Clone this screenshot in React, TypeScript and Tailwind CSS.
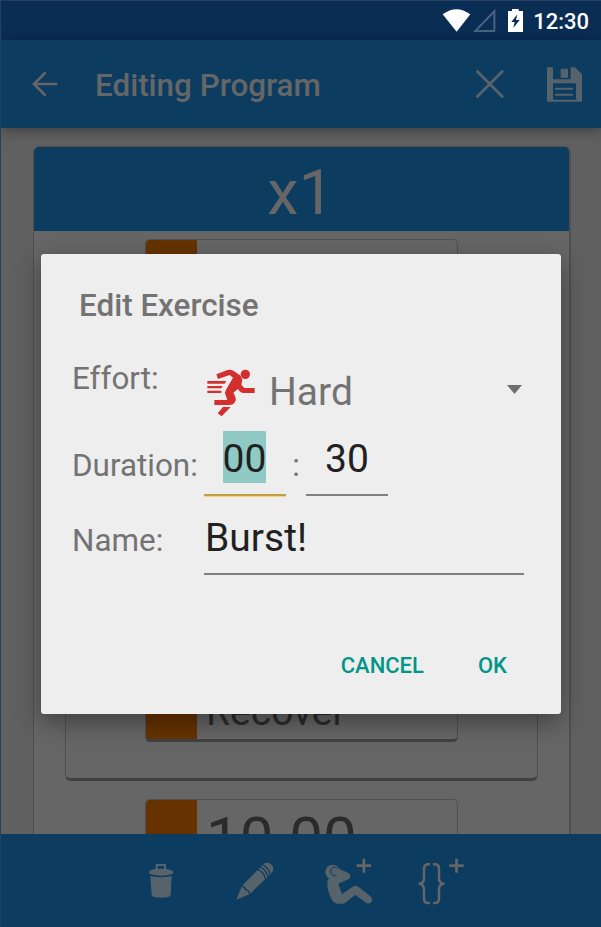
import React from "react";

function StatusIcons() {
  return (
    <svg className="h-[40px] w-[84px]" viewBox="36 3 252 120">
      <path d="M38 43 Q79 12 121 43 L80 95 Z" fill="#fff" />
      <path d="M193 34 V93 H136 Z" fill="none" stroke="#476383" strokeWidth="6" />
      <path
        fillRule="evenodd"
        fill="#fff"
        d="M234 33 H246 V27 H266 V33 H279 V96 H234 Z M262 43 L244 66 H254 L250 84 L269 60 H258 Z"
      />
    </svg>
  );
}

function BackIcon() {
  return (
    <svg className="h-[26px] w-[26px]" viewBox="96 213 78 78" fill="none" stroke="#666" strokeWidth="8">
      <path d="M172 252 H104 M137 217 L102 252 L137 287" />
    </svg>
  );
}

function CloseIcon() {
  return (
    <svg className="h-[30px] w-[30px]" viewBox="133 207 90 90" fill="none" stroke="#56636a" strokeWidth="8.500">
      <path d="M138 212 L217 292 M217 212 L138 292" />
    </svg>
  );
}

function SaveIcon() {
  return (
    <svg className="h-[35px] w-[35px]" viewBox="351 199 105 105">
      <path
        fillRule="evenodd"
        fill="#56636a"
        d="M351 200 H369 V236 H422 V200 H435 L456 221 V303 H351 Z M369 248 V297 H438 V248 Z"
      />
      <path fill="#56636a" d="M392 204 H414 V231 H392 Z M375 261 H429 V267 H375 Z M375 279 H429 V285 H375 Z" />
    </svg>
  );
}

function RunnerIcon() {
  return (
    <svg className="h-[50px] w-[50px] shrink-0" viewBox="48 54 150 150" fill="#d32f2f">
      <circle cx="166" cy="73" r="14" />
      <path d="M79 73 L113 60 Q122 58 130 62 L149 75 Q157 82 157 91 L154 104 L163 114 H194 V129 H159 Q153 129 149 124 L144 117 L130 128 L136 140 Q140 150 134 158 Q128 165 119 165 H73 V150 H112 L107 136 Q103 127 108 119 L129 83 L119 75 L84 87 Z" />
      <path d="M52 93 H109 L104 101 H52 Z M52 108 H98 L94 115 H52 Z M52 122 H94 V129 H52 Z M99 171 H122 L95 199 L83 190 Z" />
    </svg>
  );
}

function TrashIcon() {
  return (
    <svg className="h-[35px] w-[24px]" viewBox="56 58 72 105" fill="#56636a">
      <path fillRule="evenodd" d="M76 58 H107 V73 Q124 75 128 80 V87 Q110 93 92 93 Q72 93 57 87 V80 Q62 74 76 72 Z M82 64 V72 H101 V64 Z" />
      <path d="M60 94 Q92 102 124 94 L121 151 Q120 159 92 159 Q65 159 64 151 Z" />
    </svg>
  );
}

function PencilIcon() {
  return (
    <svg className="h-[38px] w-[38px]" viewBox="318 50 114 114">
      <path fill="#56636a" d="M319 163 L336 121 L401 56 Q408 50 416 53 Q433 60 429 76 L425 82 L360 146 Z" />
      <path
        fill="none"
        stroke="#0d3c61"
        strokeWidth="4"
        d="M334 122 Q345 124 346 133 Q357 134 359 147 M383 73 Q402 79 406 100 M391 66 Q409 73 413 93 M399 59 Q416 67 420 86"
      />
    </svg>
  );
}

function SitUpIcon() {
  return (
    <svg className="h-[47px] w-[48px]" viewBox="44 40 144 141">
      <circle cx="67" cy="82" r="22" fill="#56636a" />
      <path
        fill="#56636a"
        d="M67 70 Q76 66 86 72 L114 85 Q124 92 117 102 L84 117 L95 148 L127 126 Q135 120 144 126 L182 156 Q188 163 184 171 Q178 179 168 175 L135 150 L105 174 Q100 178 92 177 H80 Q72 176 67 169 Q51 143 51 116 Q50 104 58 100 Z"
      />
      <path fill="none" stroke="#0d3c61" strokeWidth="3" d="M82 72 Q70 62 62 73 Q58 84 65 90 Q70 95 79 93" />
      <path fill="none" stroke="#666" strokeWidth="8" d="M139 63 H182 M160.500 42 V84" />
    </svg>
  );
}

function BracesIcon() {
  return (
    <svg className="h-[47px] w-[46px]" viewBox="326 40 138 141" fill="none" stroke="#666">
      <path
        strokeWidth="7.500"
        d="M362 59 H357 Q344 59 344 72 V99 Q344 117 328 117 Q344 117 344 134 V162 Q344 175 357 175 H362 M371 59 H376 Q389 59 389 72 V99 Q389 117 405 117 Q389 117 389 134 V162 Q389 175 376 175 H371"
      />
      <path strokeWidth="8" d="M420 63 H463 M441.500 42 V84" />
    </svg>
  );
}

function ExerciseCard({ className, children }: { className: string; children?: React.ReactNode }) {
  return (
    <div
      className={`flex w-[313px] shrink-0 overflow-hidden rounded-[5px] border border-b-[3px] border-[#505050] border-b-[#414141] bg-[#666] text-[#2b2b2b] ${className}`}
    >
      <div className="w-[51px] shrink-0 bg-[#663300]" />
      <div className="flex-1 pl-[9px]">{children}</div>
    </div>
  );
}

export default function App() {
  return (
    <div className="relative flex h-[927px] w-[601px] flex-col overflow-hidden border-l border-[#263f68] bg-[#606060] font-['Roboto','Noto_Sans',sans-serif]">
      <div className="flex h-[40px] shrink-0 items-center justify-end border-t border-[#263f68] bg-[#0a2d53] pr-[12px]">
        <StatusIcons />
        <span className="ml-[7px] pt-[2px] text-[22px] leading-[26px] font-medium text-white">12:30</span>
      </div>

      <header className="z-10 flex h-[88px] shrink-0 items-center bg-[#0d3c61] pr-[19px] pl-[31px] shadow-[0_3px_12px_rgba(0,0,0,0.35)]">
        <BackIcon />
        <h1 className="ml-[37px] flex-1 pt-[3px] text-[31.400px] leading-[38px] font-medium text-[#666]">Editing Program</h1>
        <CloseIcon />
        <div className="ml-[42px]">
          <SaveIcon />
        </div>
      </header>

      <main className="flex h-[706px] shrink-0 flex-col overflow-hidden px-[32px] pt-[18px]">
        <section className="flex h-[900px] w-[538px] shrink-0 flex-col overflow-hidden rounded-[6px] border-t border-r-2 border-l border-[#505050] bg-[#666]">
          <div className="flex h-[84px] shrink-0 items-center justify-center bg-[#0d3c61] pr-[2px] pt-[7px] text-[63px] leading-[74px] text-[#666]">
            x1
          </div>
          <ExerciseCard className="mt-[8px] ml-[111px] h-[112px]" />
          <div className="mt-[18px] ml-[31px] flex h-[412px] w-[473px] shrink-0 flex-col justify-end rounded-[6px] border border-b-[3px] border-[#505050] border-b-[#414141] pb-[36px] pl-[79px]">
            <ExerciseCard className="h-[112px]">
              <div className="pt-[58px] text-[39px] leading-[46px]">Recover</div>
            </ExerciseCard>
          </div>
          <ExerciseCard className="mt-[18px] ml-[111px] h-[112px]">
            <div className="pt-[4px] text-[60px] leading-[70px]">10.00</div>
          </ExerciseCard>
        </section>
      </main>

      <footer className="z-10 flex h-[93px] shrink-0 bg-[#0d3c61]">
        <div className="mt-[30px] ml-[148px]">
          <TrashIcon />
        </div>
        <div className="mt-[28px] ml-[63px]">
          <PencilIcon />
        </div>
        <div className="mt-[24px] ml-[51px]">
          <SitUpIcon />
        </div>
        <div className="mt-[24px] ml-[45px]">
          <BracesIcon />
        </div>
      </footer>

      <div
        role="dialog"
        className="absolute top-[254px] left-[40px] z-20 flex h-[460px] w-[520px] flex-col rounded-[3px] bg-[#eee] pr-[37px] pl-[31px] text-[#737373] shadow-[0_8px_26px_rgba(0,0,0,0.38)]"
      >
        <h2 className="flex h-[102px] items-center pt-[1px] pl-[7px] text-[31.400px] font-medium">Edit Exercise</h2>
        <div className="flex h-[70px] items-center">
          <div className="w-[134px] pb-[24px] text-[31.400px] leading-[36px]">Effort:</div>
          <div className="pt-[4px]">
            <RunnerIcon />
          </div>
          <div className="ml-[13px] flex-1 pt-[2px] text-[39px] leading-[46px]">Hard</div>
          <svg className="mr-[2px] mb-[4px] h-[9px] w-[15px]" viewBox="0 0 15 9">
            <path d="M0 0 H15 L7.500 9 Z" fill="#6f6f6f" />
          </svg>
        </div>
        <div className="flex h-[70px] text-[31.400px] leading-[36px]">
          <div className="w-[132px] pt-[22px] whitespace-nowrap">Duration:</div>
          <div className="mb-[-1px] flex w-[82px] justify-center border-b border-[#f3d580] text-[39px] text-[#212121]">
            <div className="flex w-full justify-center border-b-2 border-[#c2a042] pt-[5px]">
              <span className="mr-[1px] h-[52px] bg-[#8fcbc4] leading-[56px]">00</span>
            </div>
          </div>
          <div className="w-[20px] pt-[22px] text-center">:</div>
          <div className="w-[82px] border-b-2 border-[#808080] pt-[5px] text-center text-[39px] leading-[56px] text-[#212121]">
            30
          </div>
        </div>
        <div className="flex h-[79px] text-[31.400px] leading-[36px]">
          <div className="w-[132px] pt-[27px]">Name:</div>
          <div className="w-[320px] border-b-2 border-[#808080] pt-[19px] pl-[1px] text-[39px] leading-[46px] text-[#212121]">Burst!</div>
        </div>
        <div className="flex justify-end gap-[54px] pt-[78px] pr-[17px] text-[22px] leading-[26px] font-medium text-[#009688]">
          <button>CANCEL</button>
          <button>OK</button>
        </div>
      </div>
    </div>
  );
}
